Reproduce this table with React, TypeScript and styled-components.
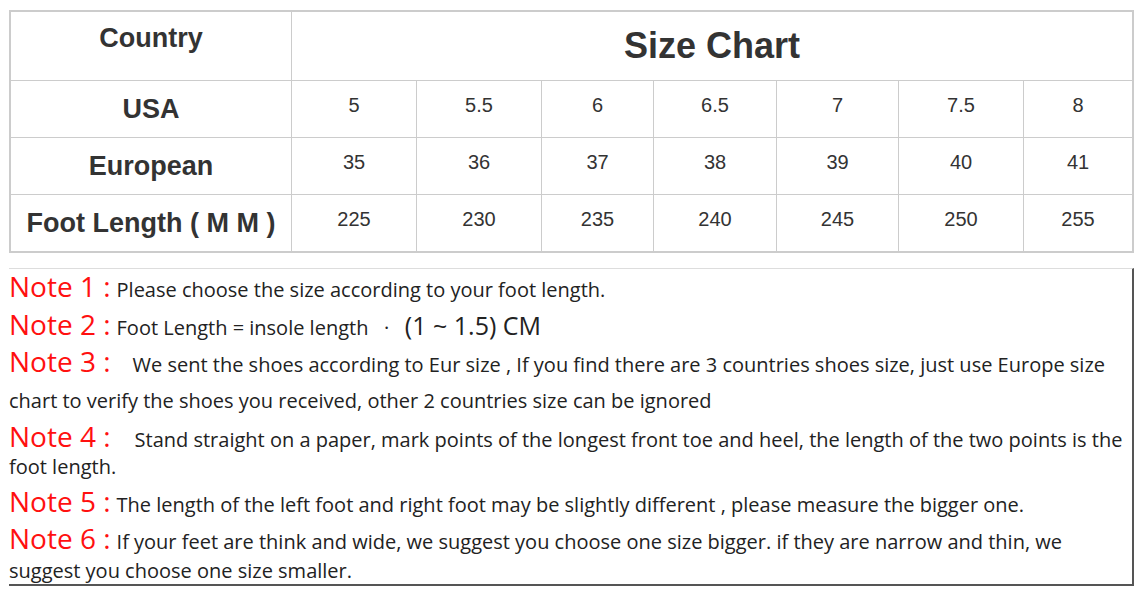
import React from 'react'
import styled, { createGlobalStyle } from 'styled-components'

const usa = ['5', '5.5', '6', '6.5', '7', '7.5', '8']
const european = ['35', '36', '37', '38', '39', '40', '41']
const footLength = ['225', '230', '235', '240', '245', '250', '255']

const rows = [
  { label: 'USA', values: usa },
  { label: 'European', values: european },
  { label: 'Foot Length ( M M )', values: footLength },
]

const GlobalStyle = createGlobalStyle`
  body {
    margin: 0;
    background: #fff;
  }
`

const App: React.FC = () => {
  return (
    <StyledPage>
      <GlobalStyle />
      <StyledChart>
        <StyledHeadCell>Country</StyledHeadCell>
        <StyledTitleCell>Size Chart</StyledTitleCell>
        {rows.map((row) => (
          <React.Fragment key={row.label}>
            <StyledLabelCell>{row.label}</StyledLabelCell>
            {row.values.map((v, i) => (
              <StyledValueCell key={i}>{v}</StyledValueCell>
            ))}
          </React.Fragment>
        ))}
      </StyledChart>

      <StyledNotes>
        <StyledNote $lh={34}>
          <StyledNoteLabel>Note 1 :</StyledNoteLabel>
          <StyledNoteText>Please choose the size according to your foot length.</StyledNoteText>
        </StyledNote>
        <StyledNote $lh={34}>
          <StyledNoteLabel>Note 2 :</StyledNoteLabel>
          <StyledNoteText>
            Foot Length = insole length&nbsp;&nbsp; ·&nbsp;&nbsp; <StyledBigText>(1 ~ 1.5) CM</StyledBigText>
          </StyledNoteText>
        </StyledNote>
        <StyledNote $lh={36} $mt={-2}>
          <StyledNoteLabel>Note 3 :</StyledNoteLabel>
          <StyledNoteText $indent={16}>
            We sent the shoes according to Eur size , If you find there are 3 countries shoes size, just use Europe size
            <br />
            chart to verify the shoes you received, other 2 countries size can be ignored
          </StyledNoteText>
        </StyledNote>
        <StyledNote $lh={27} $mt={4}>
          <StyledNoteLabel>Note 4 :</StyledNoteLabel>
          <StyledNoteText $indent={18}>
            Stand straight on a paper, mark points of the longest front toe and heel, the length of the two points is the
            <br />
            foot length.
          </StyledNoteText>
        </StyledNote>
        <StyledNote $lh={34} $mt={4}>
          <StyledNoteLabel>Note 5 :</StyledNoteLabel>
          <StyledNoteText>
            The length of the left foot and right foot may be slightly different , please measure the bigger one.
          </StyledNoteText>
        </StyledNote>
        <StyledNote $lh={29} $mt={2}>
          <StyledNoteLabel>Note 6 :</StyledNoteLabel>
          <StyledNoteText>
            If your feet are think and wide, we suggest you choose one size bigger. if they are narrow and thin, we
            <br />
            suggest you choose one size smaller.
          </StyledNoteText>
        </StyledNote>
      </StyledNotes>
    </StyledPage>
  )
}

const StyledPage = styled.div`
  padding: 10px 0 0 9px;
  width: 1125px;
`

const StyledChart = styled.div`
  display: grid;
  grid-template-columns: 280px 124px 124px 111px 122px 121px 124px 108px;
  grid-template-rows: 68px 56px 56px 56px;
  gap: 1px;
  background: #ccc;
  border: 2px solid #ccc;
  font-family: 'Liberation Sans', Arial, sans-serif;
  color: #333;
`

const StyledCell = styled.div`
  background: #fff;
  display: flex;
  align-items: center;
  justify-content: center;
`

const StyledHeadCell = styled(StyledCell)`
  font-size: 27px;
  font-weight: bold;
  padding-bottom: 16px;
`

const StyledTitleCell = styled(StyledCell)`
  grid-column: 2 / span 7;
  font-size: 36px;
  font-weight: bold;
`

const StyledLabelCell = styled(StyledCell)`
  font-size: 27px;
  font-weight: bold;
`

const StyledValueCell = styled(StyledCell)`
  font-size: 20px;
  padding-bottom: 7px;
`

const StyledNotes = styled.div`
  margin-top: 15px;
  height: 318px;
  box-sizing: border-box;
  border-top: 1px solid #ddd;
  border-right: 2px solid #555;
  border-bottom: 2px solid #555;
  font-family: 'Open Sans', sans-serif;
  color: #222;
  white-space: nowrap;
`

// strut is zeroed out so the lines only take the height of the spans
const StyledNote = styled.div<{ $lh: number; $mt?: number }>`
  font-size: 0;
  line-height: 0;
  margin-top: ${(props) => props.$mt || 0}px;
  & > span {
    line-height: ${(props) => props.$lh}px;
  }
`

const StyledNoteLabel = styled.span`
  color: #ff1010;
  font-size: 28px;
`

const StyledNoteText = styled.span<{ $indent?: number }>`
  font-size: 20px;
  margin-left: ${(props) => (props.$indent || 0) + 6}px;
`

const StyledBigText = styled.span`
  font-size: 25px;
`

export default App
